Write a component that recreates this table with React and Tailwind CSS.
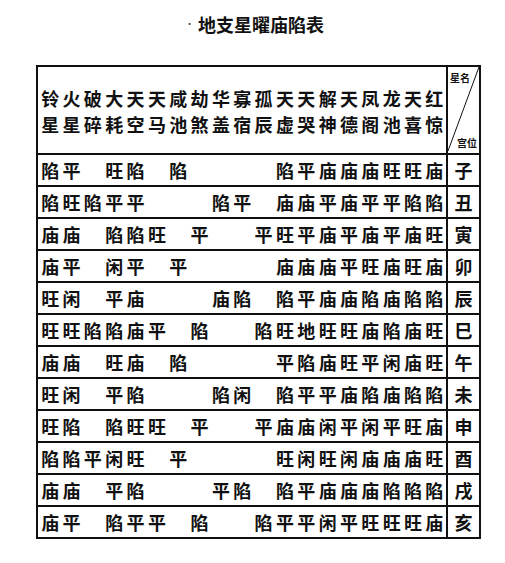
import React from 'react';

// 19颗星，上下两字
const stars = ['铃火破大天天咸劫华寡孤天天解天凤龙天红', '星星碎耗空马池煞盖宿辰虚哭神德阁池喜惊'];

// 每行19格，空格表示无
const rows = [
  ['子', '陷平 旺陷 陷    陷平庙庙庙旺旺庙'],
  ['丑', '陷旺陷平平   陷平 庙庙平庙平平陷陷'],
  ['寅', '庙庙 陷陷旺 平  平旺平庙平庙平庙旺'],
  ['卯', '庙平 闲平 平    庙庙庙平旺庙旺庙'],
  ['辰', '旺闲 平庙   庙陷 陷平庙庙陷庙陷陷'],
  ['巳', '旺旺陷陷庙平 陷  陷旺地旺旺庙陷庙旺'],
  ['午', '庙庙 旺庙 陷    平陷庙旺平闲庙旺'],
  ['未', '旺闲 平陷   陷闲 陷平平庙陷庙陷陷'],
  ['申', '旺陷 陷旺旺 平  平庙庙闲平闲平旺庙'],
  ['酉', '陷陷平闲旺 平    旺闲旺闲庙庙庙旺'],
  ['戌', '庙庙 平陷   平陷 陷平庙庙庙陷陷陷'],
  ['亥', '庙平 陷平平 陷  陷平平闲平旺旺旺庙'],
];

const font = { fontFamily: '"Noto Sans CJK SC", "Noto Sans CJK JP", sans-serif' };

function HeaderCorner() {
  return (
    <div className="relative flex w-[33px] shrink-0 flex-col justify-between border-l-2 border-[#111] pb-[4px] pl-[2px] pr-[2px] pt-[5px]">
      <svg className="absolute inset-0 h-full w-full" viewBox="0 0 31 86" preserveAspectRatio="none">
        <line x1="31" y1="0" x2="0" y2="84" stroke="#111" strokeWidth="1" />
      </svg>
      <span className="relative text-[10px] font-bold leading-[12px]">星名</span>
      <span className="relative self-end text-[10px] font-bold leading-[12px]">宫位</span>
    </div>
  );
}

export default function App() {
  return (
    <div className="h-[563px] w-[505px] overflow-hidden bg-white text-[#111]" style={font}>
      {/* 标题 */}
      <div className="flex items-center pl-[185px] pt-[12px]">
        <span className="mr-[4px] text-[9px] leading-[24px] text-[#333]">·</span>
        <span className="text-[18px] font-bold leading-[24px]">地支星曜庙陷表</span>
      </div>

      {/* 表格 */}
      <div className="ml-[36px] mt-[29px] flex w-[445px] flex-col border-2 border-[#111]">
        <div className="flex h-[86px]">
          <div className="flex w-[408px] shrink-0 flex-col justify-center pt-[1px]">
            {stars.map((line, i) => (
              <div key={i} className="grid grid-cols-[repeat(19,21.35px)] pl-[1.5px] text-[18px] font-bold leading-[26px]">
                {line.split('').map((c, j) => (
                  <span key={j} className="text-center">{c}</span>
                ))}
              </div>
            ))}
          </div>
          <HeaderCorner />
        </div>

        {rows.map(([branch, cells]) => (
          <div key={branch} className="flex h-[32px] border-t-2 border-[#111]">
            <div className="grid w-[408px] shrink-0 grid-cols-[repeat(19,21.35px)] items-center pl-[1.5px] text-[18px] font-bold leading-[24px]">
              {cells.split('').map((c, j) => (
                <span key={j} className="text-center">{c === ' ' ? '' : c}</span>
              ))}
            </div>
            <div className="flex w-[33px] shrink-0 items-center justify-center border-l-2 border-[#111] text-[18px] font-bold leading-[24px]">
              {branch}
            </div>
          </div>
        ))}
      </div>
    </div>
  );
}
